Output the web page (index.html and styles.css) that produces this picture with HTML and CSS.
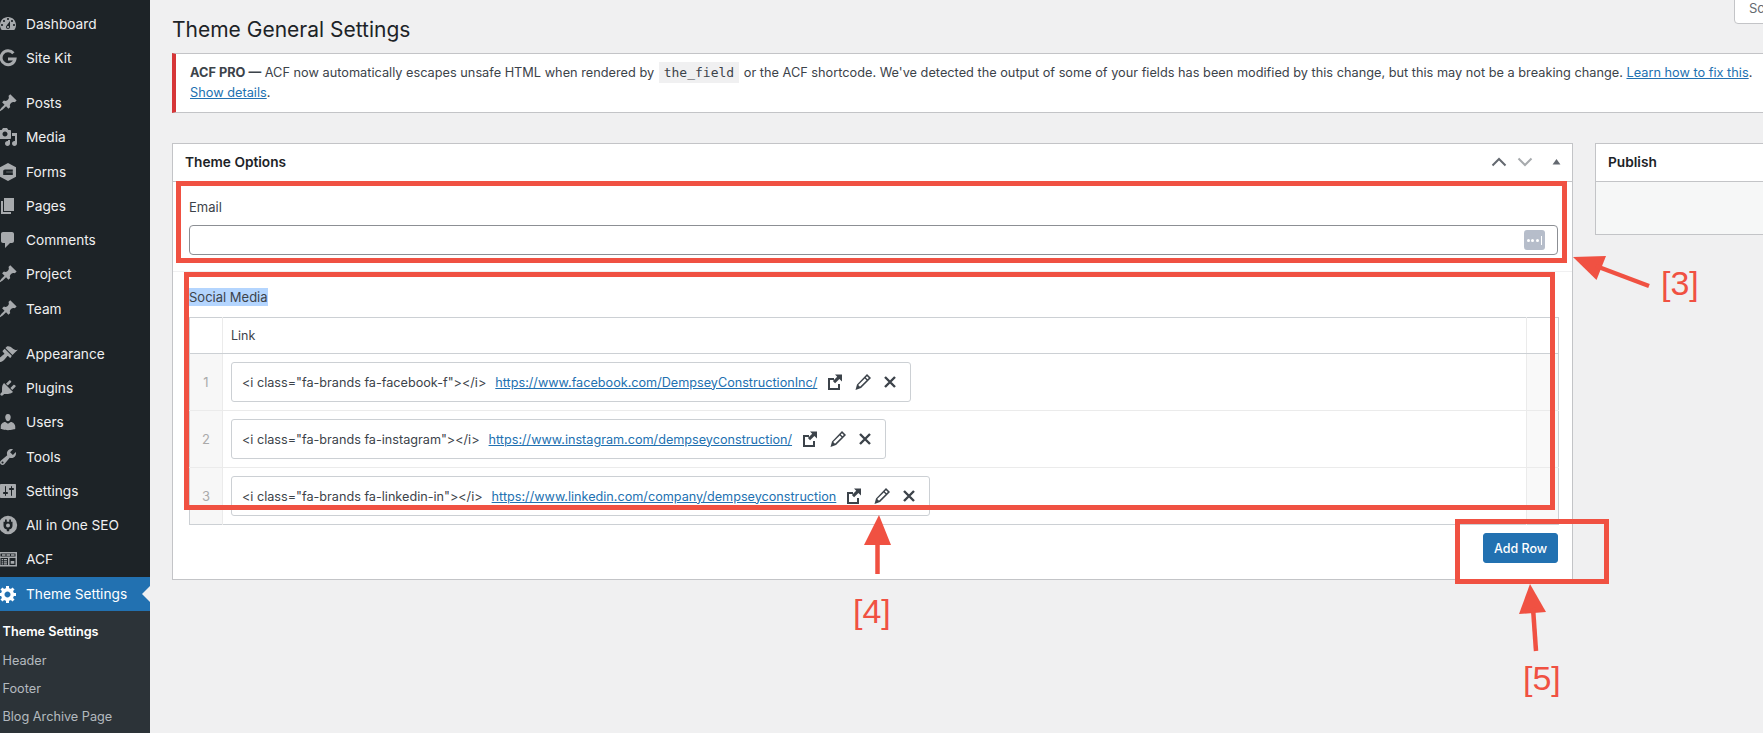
FILE: index.html
```html
<!DOCTYPE html>
<html lang="en">
<head>
<meta charset="utf-8">
<title>Theme General Settings</title>
<link rel="stylesheet" href="styles.css">
</head>
<body>
<svg class="defs" width="0" height="0" aria-hidden="true">
  <symbol id="i-dash" viewBox="0 0 20 20"><path fill-rule="evenodd" d="M3.76 16h12.48c1.1-1.37 1.76-3.11 1.76-5 0-4.42-3.58-8-8-8s-8 3.58-8 8c0 1.89.66 3.63 1.76 5zM10 4c.55 0 1 .45 1 1s-.45 1-1 1-1-.45-1-1 .45-1 1-1zM6 6c.55 0 1 .45 1 1s-.45 1-1 1-1-.45-1-1 .45-1 1-1zm8 0c.55 0 1 .45 1 1s-.45 1-1 1-1-.45-1-1 .45-1 1-1zm-5.37 5.55L12 7v6c0 1.1-.9 2-2 2s-2-.9-2-2c0-.57.24-1.08.63-1.45zM4 10c.55 0 1 .45 1 1s-.45 1-1 1-1-.45-1-1 .45-1 1-1zm12 0c.55 0 1 .45 1 1s-.45 1-1 1-1-.45-1-1 .45-1 1-1zm-5 3c0-.55-.45-1-1-1s-1 .45-1 1 .45 1 1 1 1-.45 1-1z"/></symbol>
  <symbol id="i-g" viewBox="0 0 20 20"><path fill="none" stroke="currentColor" stroke-width="3" d="M15.4 5.2A7 7 0 1 0 17 11H10"/></symbol>
  <symbol id="i-pin" viewBox="0 0 20 20"><path d="M10.44 3.02l1.82-1.82 6.36 6.35-1.83 1.82c-1.05-.68-2.48-.57-3.41.36l-.75.75c-.92.93-1.04 2.35-.35 3.41l-1.83 1.82-2.41-2.41-2.8 2.79c-.42.42-3.38 2.71-3.8 2.29s1.86-3.39 2.28-3.81l2.79-2.79L4.1 9.36l1.83-1.82c1.05.69 2.48.57 3.4-.36l.75-.75c.93-.92 1.05-2.35.36-3.41z"/></symbol>
  <symbol id="i-media" viewBox="0 0 20 20"><path fill-rule="evenodd" d="M13 11V4c0-.55-.45-1-1-1h-1.67L9 1H5L3.67 3H2c-.55 0-1 .45-1 1v7c0 .55.45 1 1 1h10c.55 0 1-.45 1-1zM7 4.5c1.38 0 2.5 1.12 2.5 2.5S8.38 9.5 7 9.5 4.5 8.38 4.5 7 5.62 4.5 7 4.5zM14 6h5v10.5c0 1.38-1.12 2.5-2.5 2.5S14 17.88 14 16.5s1.12-2.5 2.5-2.5c.17 0 .34.02.5.05V9h-3V6zm-4 8.05V13h2v3.5c0 1.38-1.12 2.5-2.5 2.5S7 17.88 7 16.5 8.12 14 9.5 14c.17 0 .34.02.5.05z"/></symbol>
  <symbol id="i-forms" viewBox="0 0 20 20"><path fill-rule="evenodd" d="M10 1l8 4.3v9.4L10 19l-8-4.3V5.300zM7 7.500c-1 0-1.800.8-1.800 1.800V13h9.600v-2.800H8.200V9.800h6.600V7.500z"/></symbol>
  <symbol id="i-pages" viewBox="0 0 20 20"><path d="M6 15V2h10v13H6zm-1 1h8v2H3V5h2v11z"/></symbol>
  <symbol id="i-comments" viewBox="0 0 20 20"><path d="M5 2h9c1.100 0 2 .9 2 2v7c0 1.100-.9 2-2 2h-2l-5 5v-5H5c-1.100 0-2-.9-2-2V4c0-1.100.9-2 2-2z"/></symbol>
  <symbol id="i-brush" viewBox="0 0 20 20"><path d="M14.480 11.060L7.410 3.990l1.500-1.500c.5-.56 2.300-.47 3.510.32 1.210.8 1.430 1.280 2.910 2.100 1.180.64 2.450 1.260 4.450.85zm-.71.710L6.700 4.700 4.930 6.470c-.39.39-.39 1.020 0 1.410l1.060 1.060c.39.39.39 1.030 0 1.420-.6.6-1.430 1.110-2.210 1.690-.35.26-.7.53-1.010.84C1.430 13.230.4 14.810.4 16.010c0 .55.2 1.030.58 1.420.38.38.87.57 1.420.57 1.200 0 2.780-1.030 4.120-2.380.31-.31.58-.66.84-1.010.58-.78 1.090-1.610 1.690-2.210.39-.39 1.030-.39 1.420 0l1.060 1.060c.39.39 1.020.39 1.410 0z"/></symbol>
  <symbol id="i-plug" viewBox="0 0 20 20"><path d="M13.110 4.360L9.870 7.600 8 5.730l3.240-3.240c.35-.34 1.050-.2 1.560.32.52.51.66 1.210.31 1.550zm-8 1.770l.91-1.120 9.010 9.010-1.190.84c-.71.71-2.630 1.160-3.820 1.160H6.140L4.900 17.260c-.59.59-1.540.59-2.120 0-.59-.58-.59-1.530 0-2.120l1.240-1.240v-3.880c0-1.130.4-3.190 1.090-3.890zm7.260 3.970l3.240-3.240c.34-.35 1.040-.21 1.550.31.52.51.66 1.210.31 1.550l-3.240 3.250z"/></symbol>
  <symbol id="i-user" viewBox="0 0 20 20"><path d="M10 9.250c-2.270 0-2.730-3.440-2.730-3.440C7 4.020 7.820 2 9.970 2c2.160 0 2.980 2.020 2.710 3.810 0 0-.41 3.440-2.680 3.440zm0 2.570L12.720 10c2.390 0 4.520 2.330 4.520 4.530v2.490s-3.650 1.130-7.240 1.130c-3.650 0-7.240-1.130-7.240-1.130v-2.490c0-2.250 1.940-4.480 4.470-4.480z"/></symbol>
  <symbol id="i-tool" viewBox="0 0 20 20"><path fill-rule="evenodd" d="M16.680 9.770c-1.340 1.340-3.300 1.670-4.950.99l-5.410 6.520c-.99.99-2.590.99-3.580 0s-.99-2.590 0-3.570l6.520-5.420c-.68-1.650-.35-3.610.99-4.950 1.280-1.280 3.120-1.620 4.720-1.060l-2.890 2.890 2.820 2.820 2.860-2.870c.53 1.580.18 3.390-1.080 4.650zM3.810 16.210c.4.39 1.040.39 1.430 0 .4-.4.4-1.040 0-1.430-.39-.4-1.030-.4-1.430 0-.39.39-.39 1.030 0 1.430z"/></symbol>
  <symbol id="i-sliders" viewBox="0 0 20 20"><path fill-rule="evenodd" d="M18 16V4c0-.55-.45-1-1-1H3c-.55 0-1 .45-1 1v12c0 .55.45 1 1 1h14c.55 0 1-.45 1-1zM8 11h1c.55 0 1 .45 1 1s-.45 1-1 1H8v1.500c0 .28-.22.5-.5.5s-.5-.22-.5-.5V13H6c-.55 0-1-.45-1-1s.45-1 1-1h1V5.500c0-.28.22-.5.5-.5s.5.22.5.5V11zm5-2h-1c-.55 0-1-.45-1-1s.45-1 1-1h1V5.500c0-.28.22-.5.5-.5s.5.22.5.5V7h1c.55 0 1 .45 1 1s-.45 1-1 1h-1v5.500c0 .28-.22.5-.5.5s-.5-.22-.5-.5V9z"/></symbol>
  <symbol id="i-seo" viewBox="0 0 20 20"><path fill-rule="evenodd" d="M10 .8a9.200 9.200 0 1 1 0 18.400A9.200 9.200 0 0 1 10 .8zM7 4.500v2.200H5.500v4c0 2 1.200 3.300 3.300 3.700v1.800h2.400v-1.800c2.100-.4 3.300-1.700 3.300-3.700v-4H13V4.500h-1.800v2.200H8.800V4.500zM10 8.500a2 2 0 1 0 0 4 2 2 0 0 0 0-4z"/></symbol>
  <symbol id="i-acf" viewBox="0 0 20 20"><path fill-rule="evenodd" d="M1 3h18v14.500H1zM2.500 4.500v3h15v-3zM2.500 9v7H10V9zM11.500 9v7h6V9zM4 5.300h3.500v1.400H4zM8.500 5.300H12v1.400H8.500zM13 5.300h3.500v1.400H13zM3.700 10h1.500v1.300H3.700zM6 10h3v1.300H6zM3.700 12.200h1.500v1.300H3.700zM6 12.200h3v1.300H6zM3.700 14.300h1.500v1.200H3.700zM6 14.300h3v1.200H6zM12.700 12h3.600v2.800h-3.600z"/></symbol>
  <symbol id="i-gear" viewBox="0 0 20 20"><path fill-rule="evenodd" d="M18 12h-2.180c-.17.7-.44 1.350-.81 1.930l1.540 1.540-2.100 2.100-1.540-1.540c-.58.36-1.230.63-1.910.79V19H8v-2.180c-.68-.16-1.330-.43-1.910-.79l-1.540 1.540-2.120-2.120 1.540-1.540c-.36-.58-.63-1.230-.79-1.910H1V9.030h2.170c.16-.7.44-1.350.8-1.940L2.430 5.550l2.100-2.100 1.540 1.540c.58-.37 1.240-.64 1.930-.81V2h3v2.180c.68.16 1.330.43 1.910.79l1.540-1.540 2.120 2.120-1.540 1.540c.36.59.64 1.240.8 1.940H18V12zm-8.500 1.500c1.660 0 3-1.340 3-3s-1.340-3-3-3-3 1.340-3 3 1.340 3 3 3z"/></symbol>
  <symbol id="i-ext" viewBox="0 0 20 20"><path d="M3 6h6v2H5v8h8v-4h2v6H3zM10 2.500h7v7l-2.600-2.600-4.300 4.300-2.200-2.200 4.300-4.300z"/></symbol>
  <symbol id="i-edit" viewBox="0 0 20 20"><path fill-rule="evenodd" d="M14 2l4 4L8 16l-5.500 2L4 12.500zM14 4.200l-1.300 1.300 1.800 1.800 1.300-1.300zM11.800 6.400L5.200 13l1.800 1.800 6.600-6.600z"/></symbol>
  <symbol id="i-x" viewBox="0 0 20 20"><path d="M5 5l10 10M15 5L5 15" fill="none" stroke="currentColor" stroke-width="2.400"/></symbol>
</svg>

<div class="page">
  <nav class="sidebar">
    <ul class="menu">
      <li class="item"><svg class="mi"><use href="#i-dash"/></svg>Dashboard</li>
      <li class="item"><svg class="mi"><use href="#i-g"/></svg>Site Kit</li>
      <li class="item sep"><svg class="mi"><use href="#i-pin"/></svg>Posts</li>
      <li class="item"><svg class="mi"><use href="#i-media"/></svg>Media</li>
      <li class="item"><svg class="mi"><use href="#i-forms"/></svg>Forms</li>
      <li class="item"><svg class="mi"><use href="#i-pages"/></svg>Pages</li>
      <li class="item"><svg class="mi"><use href="#i-comments"/></svg>Comments</li>
      <li class="item"><svg class="mi"><use href="#i-pin"/></svg>Project</li>
      <li class="item"><svg class="mi"><use href="#i-pin"/></svg>Team</li>
      <li class="item sep"><svg class="mi"><use href="#i-brush"/></svg>Appearance</li>
      <li class="item"><svg class="mi"><use href="#i-plug"/></svg>Plugins</li>
      <li class="item"><svg class="mi"><use href="#i-user"/></svg>Users</li>
      <li class="item"><svg class="mi"><use href="#i-tool"/></svg>Tools</li>
      <li class="item"><svg class="mi"><use href="#i-sliders"/></svg>Settings</li>
      <li class="item"><svg class="mi"><use href="#i-seo"/></svg>All in One SEO</li>
      <li class="item"><svg class="mi"><use href="#i-acf"/></svg>ACF</li>
      <li class="item current"><svg class="mi"><use href="#i-gear"/></svg>Theme Settings</li>
    </ul>
    <ul class="submenu">
      <li class="sub active">Theme Settings</li>
      <li class="sub">Header</li>
      <li class="sub">Footer</li>
      <li class="sub">Blog Archive Page</li>
    </ul>
  </nav>

  <main class="main">
    <div class="screen-tab">Screen Options</div>
    <h1 class="title">Theme General Settings</h1>
    <div class="notice">
      <p class="notice-text"><strong>ACF PRO —</strong> ACF now automatically escapes unsafe HTML when rendered by <code class="code">the_field</code> or the ACF shortcode. We've detected the output of some of your fields has been modified by this change, but this may not be a breaking change. <a class="link" href="#">Learn how to fix this</a>.<br><a class="link" href="#">Show details</a>.</p>
    </div>

    <div class="columns">
      <section class="postbox">
        <header class="box-head">
          <h2 class="box-title">Theme Options</h2>
          <div class="box-controls">
            <svg class="ctl" viewBox="0 0 16 10"><path d="M1.500 8.500L8 2l6.500 6.500" fill="none" stroke="#646970" stroke-width="2"/></svg>
            <svg class="ctl" viewBox="0 0 16 10"><path d="M1.500 1.500L8 8l6.500-6.500" fill="none" stroke="#a7aaad" stroke-width="2"/></svg>
            <svg class="tri" viewBox="0 0 10 8"><path d="M5 1l4.500 6.500H.5z" fill="#646970"/></svg>
          </div>
        </header>
        <div class="field field-email">
          <label class="label">Email</label>
          <div class="input">
            <span class="pw-icon"><i></i><i></i><i></i><b></b></span>
          </div>
        </div>
        <div class="field field-social">
          <label class="label"><span class="selected">Social Media</span></label>
          <table class="rep">
            <colgroup><col class="c-num"><col><col class="c-act"></colgroup>
            <thead>
              <tr><th class="num-h"></th><th class="link-h">Link</th><th class="act-h"></th></tr>
            </thead>
            <tbody>
              <tr>
                <td class="num">1</td>
                <td class="cell"><div class="linkbox"><span class="code-text">&lt;i class="fa-brands fa-facebook-f"&gt;&lt;/i&gt;</span><a class="link" href="#">https://www.facebook.com/DempseyConstructionInc/</a><span class="acts"><svg class="ai"><use href="#i-ext"/></svg><svg class="ai"><use href="#i-edit"/></svg><svg class="ai"><use href="#i-x"/></svg></span></div></td>
                <td class="act"></td>
              </tr>
              <tr>
                <td class="num">2</td>
                <td class="cell"><div class="linkbox"><span class="code-text">&lt;i class="fa-brands fa-instagram"&gt;&lt;/i&gt;</span><a class="link" href="#">https://www.instagram.com/dempseyconstruction/</a><span class="acts"><svg class="ai"><use href="#i-ext"/></svg><svg class="ai"><use href="#i-edit"/></svg><svg class="ai"><use href="#i-x"/></svg></span></div></td>
                <td class="act"></td>
              </tr>
              <tr>
                <td class="num">3</td>
                <td class="cell"><div class="linkbox"><span class="code-text">&lt;i class="fa-brands fa-linkedin-in"&gt;&lt;/i&gt;</span><a class="link" href="#">https://www.linkedin.com/company/dempseyconstruction</a><span class="acts"><svg class="ai"><use href="#i-ext"/></svg><svg class="ai"><use href="#i-edit"/></svg><svg class="ai"><use href="#i-x"/></svg></span></div></td>
                <td class="act"></td>
              </tr>
            </tbody>
          </table>
          <div class="rep-foot"><button class="btn" type="button">Add Row</button></div>
        </div>
      </section>

      <aside class="postbox side">
        <header class="box-head"><h2 class="box-title">Publish</h2></header>
        <div class="side-body"></div>
      </aside>
    </div>
  </main>
</div>

<div class="mark mark-3"></div>
<div class="mark mark-4"></div>
<div class="mark mark-5"></div>
<svg class="arrows" width="1763" height="733" viewBox="0 0 1763 733" aria-hidden="true">
  <g fill="#f05142" stroke="#f05142">
    <path d="M1573 257l33-1-9.500 24z" stroke="none"/>
    <path d="M1596 266l53 20" stroke-width="4.500" fill="none"/>
    <path d="M879 515l-15 30h27z" stroke="none"/>
    <path d="M877.500 540v34" stroke-width="4.500" fill="none"/>
    <path d="M1530 584l-11 30 27-2z" stroke="none"/>
    <path d="M1533 608l3 43" stroke-width="4.500" fill="none"/>
  </g>
</svg>
<span class="note note-3">[3]</span>
<span class="note note-4">[4]</span>
<span class="note note-5">[5]</span>
</body>
</html>
```

FILE: styles.css
```css
* { box-sizing: border-box; }
html, body { margin: 0; padding: 0; width: 1763px; height: 733px; overflow: hidden; }
body { background: #f0f0f1; font-family: Inter, "Noto Sans", sans-serif; font-size: 12.750px; color: #3c434a; position: relative; }
.defs { position: absolute; }
ul { list-style: none; margin: 0; padding: 0; }

.page { display: flex; height: 733px; }

.sidebar { width: 150px; flex: none; height: 733px; background: #1d2327; padding-top: 6.500px; overflow: hidden; }
.item { height: 34.25px; display: flex; align-items: center; padding-left: 26px; position: relative; color: #f0f0f1; font-size: 13.700px; }
.item.sep { margin-top: 11px; }
.mi { position: absolute; left: -2px; top: 7px; width: 20px; height: 20px; fill: #a7aaad; color: #a7aaad; }
.item.current { background: #2271b1; color: #fff; }
.item.current .mi { fill: #fff; color: #fff; }
.item.current::after { content: ""; position: absolute; right: 0; top: 9px; border: 8px solid transparent; border-right-color: #f0f0f1; border-left-width: 0; }
.submenu { background: #2c3338; padding-top: 7px; height: 124px; }
.sub { height: 28.300px; display: flex; align-items: center; padding-left: 2.500px; color: rgba(240,246,252,.7); font-size: 12.700px; }
.sub.active { color: #fff; font-weight: 600; font-size: 12.700px; }

.main { flex: 1; min-width: 0; padding-left: 22px; position: relative; }
.screen-tab { position: absolute; left: 1584px; top: -4px; width: 120px; height: 28px; padding: 3px 0 0 14px; background: #fff; border: 1px solid #c3c4c7; border-radius: 4px; color: #646970; font-size: 13px; white-space: nowrap; }
.title { margin: 0; height: 53px; padding-top: 16px; font-size: 21px; line-height: 27px; font-weight: 400; color: #1d2327; }
.notice { height: 60px; margin-right: -10px; background: #fff; border: 1px solid #c3c4c7; border-left: 4px solid #d63638; border-right: 0; padding: 8px 14px 0; }
.notice-text { margin: 0; line-height: 19px; color: #3c434a; white-space: nowrap; }
.code { display: inline-block; height: 21px; margin: 0 1px; padding: 0 5px; background: #f0f0f1; font-family: "DejaVu Sans Mono", monospace; font-size: 13px; line-height: 21px; }
.link { color: #2271b1; text-decoration: underline; }

.columns { display: flex; gap: 22px; margin-top: 30px; align-items: flex-start; }
.postbox { width: 1401px; flex: none; background: #fff; border: 1px solid #c3c4c7; }
.side { width: 280px; }
.box-head { height: 38px; border-bottom: 1px solid #c3c4c7; display: flex; align-items: center; justify-content: space-between; padding: 0 12px 1px; }
.box-title { margin: 0; font-size: 13.700px; line-height: 18px; font-weight: 600; color: #1d2327; }
.box-controls { display: flex; align-items: center; gap: 10px; margin-right: -3px; }
.ctl { width: 16px; height: 10px; }
.tri { width: 9px; height: 7px; margin-left: 9px; margin-top: -2px; margin-right: 2px; }
.side-body { height: 52px; background: #f6f7f7; }

.field { padding: 0 14px 0 16px; }
.field-email { height: 90px; padding-top: 16px; border-bottom: 1px solid #f0f0f1; }
.label { display: block; height: 18px; font-size: 13px; line-height: 18px; color: #3c434a; }
.input { height: 30px; margin-top: 9px; background: #fff; border: 1px solid #8c8f94; border-radius: 4px; display: flex; align-items: center; justify-content: flex-end; padding-right: 12px; }
.pw-icon { width: 21px; height: 20px; border-radius: 3px; background: #b6bdca; display: flex; align-items: center; justify-content: center; gap: 1.500px; }
.pw-icon i { width: 3px; height: 3px; background: #fff; border-radius: 50%; }
.pw-icon b { width: 1px; height: 9px; background: #fff; margin-left: 1px; }

.field-social { padding-top: 16px; }
.selected { background: #b4d5fe; display: inline-block; }
.rep { width: 1370px; border-collapse: collapse; table-layout: fixed; margin-top: 11px; border: 1px solid #ccd0d4; font-size: 12px; }
.c-num { width: 33px; }
.c-act { width: 32px; }
.rep th { height: 36px; background: #fff; border-bottom: 1px solid #ccd0d4; font-weight: 400; text-align: left; padding: 0 8px; color: #3c434a; font-size: 12.500px; }
.rep th.num-h { border-right: 1px solid #ebebeb; }
.rep th.link-h { border-right: 1px solid #ebebeb; }
.rep td { height: 57px; border-top: 1px solid #ebebeb; padding: 0; }
.num { background: #f7f7f7; text-align: center; color: #aaa; border-right: 1px solid #ebebeb; font-size: 13px; }
.act { background: #f9f9f9; border-left: 1px solid #ebebeb; }
.cell { padding: 0 8px !important; vertical-align: middle; }
.linkbox { display: inline-flex; align-items: center; height: 40px; padding: 0 10px; background: #fff; border: 1px solid #ccd0d4; border-radius: 3px; white-space: nowrap; color: #3c434a; font-size: 12.650px; }
.code-text { margin-right: 9px; }
.acts { display: flex; align-items: center; gap: 7.500px; margin-left: 8px; }
.ai { width: 20px; height: 20px; fill: #3c434a; color: #3c434a; }
.rep-foot { display: flex; justify-content: flex-end; padding-top: 8px; height: 54px; }
.btn { width: 75px; height: 30px; background: #2271b1; color: #fff; border: 1px solid #2271b1; border-radius: 3px; font-family: inherit; font-size: 12.500px; font-weight: 500; padding: 0; }

.mark { position: absolute; border: 5px solid #f05142; }
.mark-3 { left: 176px; top: 181px; width: 1391px; height: 82px; }
.mark-4 { left: 184px; top: 272px; width: 1371px; height: 238px; }
.mark-5 { left: 1455px; top: 519px; width: 154px; height: 65px; }
.arrows { position: absolute; left: 0; top: 0; pointer-events: none; }
.note { position: absolute; font-family: "Liberation Sans", sans-serif; font-size: 34px; line-height: 36px; color: #f05142; white-space: nowrap; }
.note-3 { left: 1661px; top: 265px; }
.note-4 { left: 853px; top: 593px; }
.note-5 { left: 1523px; top: 660px; }
```
